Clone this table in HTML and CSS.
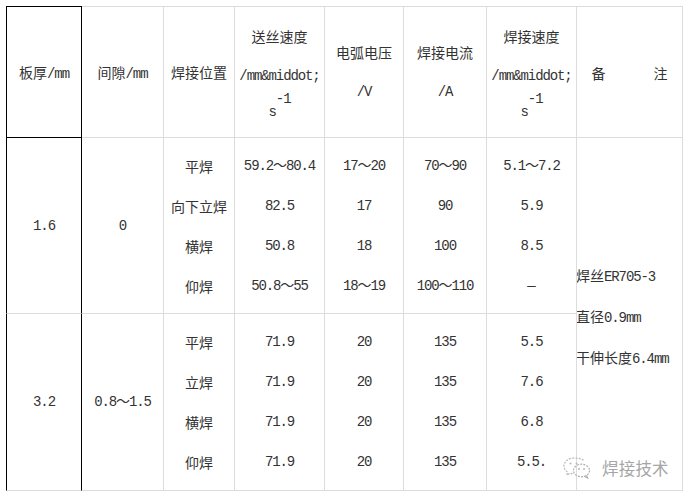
FILE: index.html
```html
<!DOCTYPE html>
<html lang="zh-CN">
<head>
<meta charset="utf-8">
<title>焊接参数表</title>
<link rel="stylesheet" href="styles.css">
</head>
<body>
<div class="page">
  <div class="sheet">
    <div class="c h k"><div class="ln">板厚<span class="m">/mm</span></div></div>
    <div class="c h"><div class="ln">间隙<span class="m">/mm</span></div></div>
    <div class="c h"><div class="ln">焊接位置</div></div>
    <div class="c h"><div class="ln">送丝速度</div><div class="ln m">/mm&amp;middot;</div><div class="ln3 m">s<sup>-1</sup></div></div>
    <div class="c h"><div class="ln">电弧电压</div><div class="ln m">/V</div></div>
    <div class="c h"><div class="ln">焊接电流</div><div class="ln m">/A</div></div>
    <div class="c h"><div class="ln">焊接速度</div><div class="ln m">/mm&amp;middot;</div><div class="ln3 m">s<sup>-1</sup></div></div>
    <div class="c h note"><span>备</span><span>注</span></div>

    <div class="c rm">
      <div class="rl">焊丝<span class="m">ER705-3</span></div>
      <div class="rl">直径<span class="m">0.9mm</span></div>
      <div class="rl">干伸长度<span class="m">6.4mm</span></div>
    </div>

    <div class="c k"><div class="ln m">1.6</div></div>
    <div class="c"><div class="ln m">0</div></div>
    <div class="c"><div class="ln">平焊</div><div class="ln">向下立焊</div><div class="ln">横焊</div><div class="ln">仰焊</div></div>
    <div class="c m"><div class="ln">59.2～80.4</div><div class="ln">82.5</div><div class="ln">50.8</div><div class="ln">50.8～55</div></div>
    <div class="c m"><div class="ln">17～20</div><div class="ln">17</div><div class="ln">18</div><div class="ln">18～19</div></div>
    <div class="c m"><div class="ln">70～90</div><div class="ln">90</div><div class="ln">100</div><div class="ln">100～110</div></div>
    <div class="c m"><div class="ln">5.1～7.2</div><div class="ln">5.9</div><div class="ln">8.5</div><div class="ln"><span class="dash">—</span></div></div>

    <div class="c k"><div class="ln m">3.2</div></div>
    <div class="c"><div class="ln m">0.8～1.5</div></div>
    <div class="c"><div class="ln">平焊</div><div class="ln">立焊</div><div class="ln">横焊</div><div class="ln">仰焊</div></div>
    <div class="c m"><div class="ln">71.9</div><div class="ln">71.9</div><div class="ln">71.9</div><div class="ln">71.9</div></div>
    <div class="c m"><div class="ln">20</div><div class="ln">20</div><div class="ln">20</div><div class="ln">20</div></div>
    <div class="c m"><div class="ln">135</div><div class="ln">135</div><div class="ln">135</div><div class="ln">135</div></div>
    <div class="c m"><div class="ln">5.5</div><div class="ln">7.6</div><div class="ln">6.8</div><div class="ln">5.5.</div></div>
  </div>

  <div class="wm">
    <svg class="wm-icon" width="30" height="24" viewBox="0 0 30 24">
      <path d="M12 2C6.5 2 2 5.6 2 10c0 2.5 1.4 4.7 3.6 6.1L4.8 19l3.3-1.7c1.2.3 2.5.5 3.9.5" fill="none" stroke="#b8b8b8" stroke-width="1.2" stroke-dasharray="2 1.2"/>
      <path d="M21.5 4.3C19.6 2.9 16 2 12 2" fill="none" stroke="#b8b8b8" stroke-width="1.2" stroke-dasharray="2 1.2"/>
      <ellipse cx="19.5" cy="14.5" rx="8" ry="6.3" fill="none" stroke="#b0b0b0" stroke-width="1.2" stroke-dasharray="2 1.2"/>
      <path d="M24.5 19.5l1.2 2.6-3.2-1.6" fill="none" stroke="#b0b0b0" stroke-width="1.1"/>
      <circle cx="8.5" cy="7.5" r="1" fill="#b8b8b8"/>
      <circle cx="14.5" cy="7.5" r="1" fill="#b8b8b8"/>
      <circle cx="17" cy="13" r="0.9" fill="#b0b0b0"/>
      <circle cx="22" cy="13" r="0.9" fill="#b0b0b0"/>
    </svg>
    <span class="wm-text">焊接技术</span>
  </div>
</div>
</body>
</html>
```

FILE: styles.css
```css
html, body {
  margin: 0;
  padding: 0;
  background: #ffffff;
}

body {
  font-family: "Noto Sans CJK SC", "Noto Sans", sans-serif;
  font-size: 14px;
  color: #333333;
}

.page {
  position: relative;
  width: 692px;
  height: 501px;
  padding: 6px 0 0 6px;
  box-sizing: border-box;
}

.sheet {
  display: grid;
  grid-template-columns: 76px 82px 71px 90px 79px 83px 90px 106px;
  grid-template-rows: 132px 176px 177px;
}

.c {
  box-sizing: border-box;
  border-right: 1px solid #dcdcdc;
  border-bottom: 1px solid #dcdcdc;
  display: flex;
  flex-direction: column;
  align-items: center;
  justify-content: center;
  white-space: nowrap;
}

.h {
  border-top: 1px solid #dcdcdc;
}

.k {
  border-left: 1px solid #000000;
  border-right-color: #000000;
}

.h.k {
  border-top-color: #000000;
  border-bottom-color: #000000;
}

.m {
  font-family: "Liberation Mono", "Noto Sans CJK SC", monospace;
  letter-spacing: -1.1px;
}

.ln {
  height: 40px;
  line-height: 40px;
}

.ln3 {
  height: 32px;
  line-height: 32px;
}

.ln3 sup {
  font-size: 14px;
  line-height: 0;
  vertical-align: 13px;
}

.note {
  flex-direction: row;
  gap: 48px;
  padding-top: 2px;
}

.dash {
  font-family: "Liberation Mono", monospace;
  letter-spacing: 0;
}

.rm {
  grid-column: 8;
  grid-row: 2 / span 2;
  align-items: flex-start;
  padding-top: 4px;
}

.rl {
  height: 41px;
  line-height: 41px;
  margin-left: -1px;
}

.wm {
  position: absolute;
  left: 562px;
  top: 456px;
  display: flex;
  align-items: center;
  gap: 10px;
}

.wm-text {
  font-size: 16.5px;
  color: #a6a6a6;
  letter-spacing: 0.2px;
  text-shadow: 0 0 1px #ffffff;
}
```
